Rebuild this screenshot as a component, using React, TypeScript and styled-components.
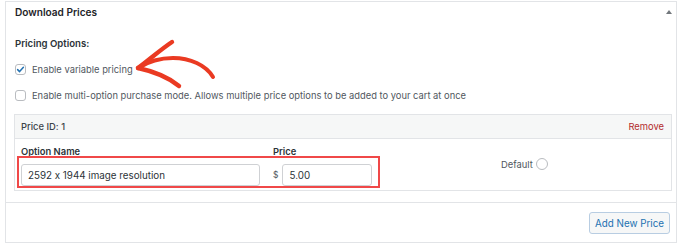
import React from 'react';
import styled, {createGlobalStyle} from 'styled-components';

const GlobalStyle = createGlobalStyle`
  html, body {
    margin: 0;
    padding: 0;
    background: #ffffff;
  }
  body {
    font-family: Inter, "Liberation Sans", Arial, sans-serif;
    font-feature-settings: "calt" 0;
    color: #3c434a;
  }
`

const Page = styled.div`
  position: relative;
  width: 680px;
  height: 244px;
  padding-top: 1px;
  box-sizing: border-box;
`

const Panel = styled.div`
  margin-left: 5px;
  width: 672px;
  height: 242px;
  box-sizing: border-box;
  border: 1px solid #e2e4e7;
  display: flex;
  flex-direction: column;
`

const PanelHeader = styled.div`
  display: flex;
  justify-content: space-between;
  align-items: center;
  height: 20px;
  padding: 0 4px 0 9px;
`

const PanelTitle = styled.h2`
  margin: 0;
  font-size: 10.1px;
  font-weight: 600;
  color: #1d2327;
`

const ToggleArrow = styled.span`
  width: 0;
  height: 0;
  border-left: 3px solid transparent;
  border-right: 3px solid transparent;
  border-bottom: 4px solid #72777c;
`

const PanelBody = styled.div`
  padding: 0 4px 0 8px;
  flex: 1;
`

const SectionLabel = styled.p`
  margin: 15px 0 0 1px;
  line-height: 14px;
  font-size: 9.6px;
  font-weight: 600;
  color: #2c3338;
`

const CheckRow = styled.label<{gap: number}>`
  display: flex;
  align-items: center;
  gap: 6px;
  margin: ${props => props.gap}px 0 0 1px;
  height: 16px;
  font-size: 9.35px;
  color: #50575e;
`

const CheckBox = styled.span`
  display: inline-flex;
  align-items: center;
  justify-content: center;
  width: 11px;
  height: 11px;
  border: 1px solid #b9bcc0;
  border-radius: 3px;
  box-sizing: border-box;
  background: #fff;
`

const PriceBox = styled.div`
  margin-top: 11px;
  border: 1px solid #e2e4e7;
`

const PriceBoxHeader = styled.div`
  display: flex;
  justify-content: space-between;
  align-items: center;
  height: 23px;
  padding: 0 7px 0 6px;
  background: #f6f7f7;
  border-bottom: 1px solid #e2e4e7;
  font-size: 9.4px;
  font-weight: 500;
  color: #3c434a;
`

const RemoveLink = styled.a`
  color: #b32d2e;
  font-weight: 400;
  text-decoration: none;
`

const PriceFields = styled.div`
  position: relative;
  display: grid;
  grid-template-columns: 239px 215px auto;
  column-gap: 13px;
  padding: 5px 6px 5px 6px;
  height: 51px;
  box-sizing: border-box;
`

const Field = styled.div`
  display: flex;
  flex-direction: column;
  gap: 5px;
`

const FieldLabel = styled.span`
  line-height: 15px;
  font-size: 9.4px;
  font-weight: 600;
  color: #2c3338;
`

const TextInput = styled.div<{width: number}>`
  display: flex;
  align-items: center;
  width: ${props => props.width}px;
  height: 22px;
  box-sizing: border-box;
  padding: 0 6px;
  border: 1px solid #cfd1d4;
  border-radius: 3px;
  font-size: 9.8px;
  color: #2c3338;
`

const PriceInputRow = styled.div`
  display: flex;
  align-items: center;
  gap: 4px;
  font-size: 8.5px;
  color: #50575e;
`

const DefaultField = styled.label`
  align-self: center;
  display: flex;
  align-items: center;
  gap: 3px;
  margin-bottom: 2px;
  font-size: 9.4px;
  color: #50575e;
`

const Radio = styled.span`
  width: 12px;
  height: 12px;
  box-sizing: border-box;
  border: 1px solid #b9bcc0;
  border-radius: 50%;
`

const Highlight = styled.div`
  position: absolute;
  left: 2px;
  top: 17px;
  width: 363px;
  height: 32px;
  box-sizing: border-box;
  border: 2px solid #f04848;
  pointer-events: none;
`

const PanelFooter = styled.div`
  display: flex;
  justify-content: flex-end;
  border-top: 1px solid #e2e4e7;
  padding: 9px 6px 8px 0;
  margin-top: 10px;
`

const AddButton = styled.button`
  height: 22px;
  width: 81px;
  padding: 0;
  border: 1px solid #b8cde2;
  border-radius: 3px;
  background: #f6f7f7;
  color: #2271b1;
  font-family: inherit;
  font-size: 9.8px;
`

const ArrowOverlay = styled.svg`
  position: absolute;
  left: 0;
  top: 0;
  pointer-events: none;
`

function CheckMark() {
  return (
    <svg width="9" height="9" viewBox="0 0 9 9">
      <path d="M1.6 4.6 L3.6 6.6 L7.4 2.2" fill="none" stroke="#2271b1" strokeWidth="1.5" strokeLinecap="round" strokeLinejoin="round" />
    </svg>
  )
}

function App() {
  return (
    <Page>
      <GlobalStyle />
      <Panel>
        <PanelHeader>
          <PanelTitle>Download Prices</PanelTitle>
          <ToggleArrow />
        </PanelHeader>
        <PanelBody>
          <SectionLabel>Pricing Options:</SectionLabel>
          <CheckRow gap={10}>
            <CheckBox><CheckMark /></CheckBox>
            Enable variable pricing
          </CheckRow>
          <CheckRow gap={10}>
            <CheckBox />
            Enable multi-option purchase mode. Allows multiple price options to be added to your cart at once
          </CheckRow>
          <PriceBox>
            <PriceBoxHeader>
              <span>Price ID: 1</span>
              <RemoveLink>Remove</RemoveLink>
            </PriceBoxHeader>
            <PriceFields>
              <Field>
                <FieldLabel>Option Name</FieldLabel>
                <TextInput width={239}>2592 x 1944 image resolution</TextInput>
              </Field>
              <Field>
                <FieldLabel>Price</FieldLabel>
                <PriceInputRow>
                  $
                  <TextInput width={90}>5.00</TextInput>
                </PriceInputRow>
              </Field>
              <DefaultField>
                Default
                <Radio />
              </DefaultField>
              <Highlight />
            </PriceFields>
          </PriceBox>
        </PanelBody>
        <PanelFooter>
          <AddButton>Add New Price</AddButton>
        </PanelFooter>
      </Panel>
      <ArrowOverlay width="680" height="244" viewBox="0 0 680 244">
        <g fill="none" stroke="#ea3a22" strokeLinecap="round" strokeLinejoin="round">
          <path d="M138 68 C149 61 160 58 173 58 C190 58 206 65 213 77" strokeWidth="4" />
          <path d="M138 68 C149 60 160 50 172 42" strokeWidth="4.4" />
          <path d="M138 68 C152 71 167 76 179 86" strokeWidth="4.4" />
        </g>
      </ArrowOverlay>
    </Page>
  )
}

export default App
